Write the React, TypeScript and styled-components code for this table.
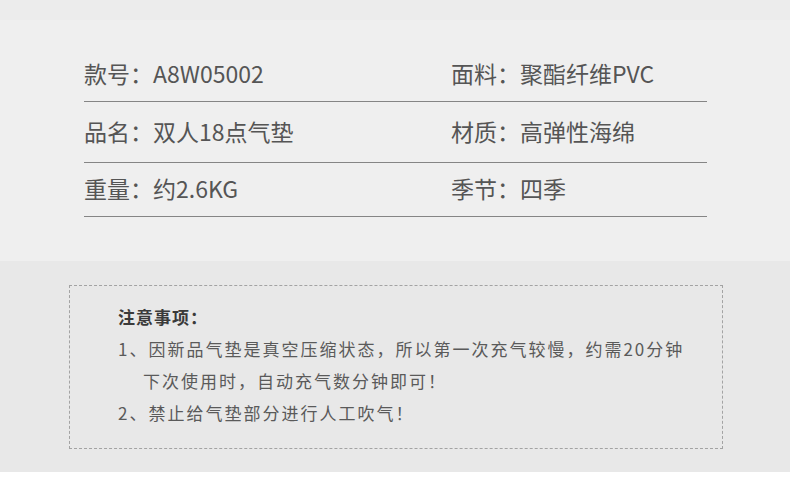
import React from "react";
import styled, { createGlobalStyle } from "styled-components";

const GlobalStyle = createGlobalStyle`
  html, body { margin: 0; padding: 0; background: #ffffff; }
  body { font-family: "Noto Sans CJK SC", "Noto Sans", sans-serif; }
`;

const Page = styled.div`
  width: 790px;
  display: flex;
  flex-direction: column;
`;

const SpecSection = styled.section`
  background: #efefef;
  height: 261px;
  box-sizing: border-box;
  padding: 38px 83px 0 84px;
  border-top: 20px solid #ececec;
`;

const SpecGrid = styled.div`
  display: grid;
  grid-template-columns: 367px 256px;
`;

const SpecCell = styled.div<{ $top: number; $bottom: number }>`
  padding: ${(p) => p.$top}px 0 ${(p) => p.$bottom}px;
  border-bottom: 1px solid #858585;
  font-size: 23px;
  line-height: 31px;
  color: #555555;
  white-space: nowrap;
`;

const NoticeSection = styled.section`
  background: #e8e8e8;
  height: 211px;
  box-sizing: border-box;
  padding: 24px 67px 0 69px;
`;

const NoticeBox = styled.div`
  height: 164px;
  box-sizing: border-box;
  border: 1px dashed #a3a3a3;
  padding: 15px 20px 0 48px;
  color: #5a5a5a;
  font-size: 17px;
  line-height: 32px;
  letter-spacing: 2px;
`;

const NoticeTitle = styled.div`
  font-weight: bold;
  color: #3a3a3a;
  letter-spacing: 1px;
`;

const NoticeLine = styled.div<{ $indent?: boolean }>`
  padding-left: ${(p) => (p.$indent ? 25 : 0)}px;
  white-space: nowrap;
`;

const rows: { left: string; right: string; top: number; bottom: number }[] = [
  { left: "款号：A8W05002", right: "面料：聚酯纤维PVC", top: 0, bottom: 12 },
  { left: "品名：双人18点气垫", right: "材质：高弹性海绵", top: 14, bottom: 15 },
  { left: "重量：约2.6KG", right: "季节：四季", top: 10, bottom: 12 },
];

export default function App() {
  return (
    <Page>
      <GlobalStyle />
      <SpecSection>
        <SpecGrid>
          {rows.map((r) => (
            <React.Fragment key={r.left}>
              <SpecCell $top={r.top} $bottom={r.bottom}>{r.left}</SpecCell>
              <SpecCell $top={r.top} $bottom={r.bottom}>{r.right}</SpecCell>
            </React.Fragment>
          ))}
        </SpecGrid>
      </SpecSection>
      <NoticeSection>
        <NoticeBox>
          <NoticeTitle>注意事项：</NoticeTitle>
          <NoticeLine>1、因新品气垫是真空压缩状态，所以第一次充气较慢，约需20分钟</NoticeLine>
          <NoticeLine $indent>下次使用时，自动充气数分钟即可！</NoticeLine>
          <NoticeLine>2、禁止给气垫部分进行人工吹气！</NoticeLine>
        </NoticeBox>
      </NoticeSection>
    </Page>
  );
}
